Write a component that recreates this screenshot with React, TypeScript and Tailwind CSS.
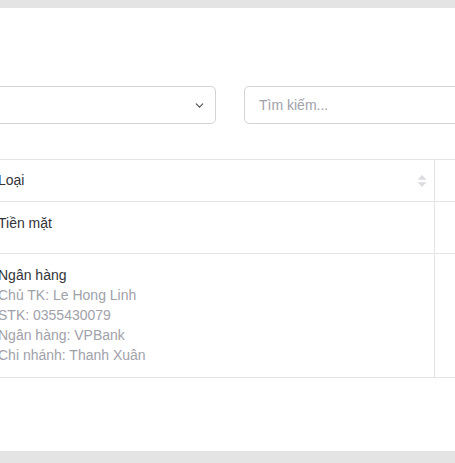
import { ChevronDown } from "lucide-react";

function SortIcon() {
  return (
    <svg width="10" height="14" viewBox="0 0 10 14" className="text-[#dcdce0]">
      <path d="M5 1 L9.5 5.8 H0.5 Z" fill="currentColor" />
      <path d="M5 13 L9.5 8.2 H0.5 Z" fill="currentColor" />
    </svg>
  );
}

export default function App() {
  return (
    <div className="w-[455px] h-[463px] overflow-hidden bg-[#e4e4e4] pt-[8px] pb-[12px] font-['Liberation_Sans',Arial,sans-serif] text-[14px]">
      <div className="h-full bg-white overflow-hidden">
        <div className="ml-[-17px] w-[520px] pt-[78px]">
          <div className="flex gap-[28px] h-[38px]">
            <div className="w-[233px] flex items-center justify-end pr-[9px] border border-[#d4d4d8] rounded-[5px]">
              <ChevronDown size={13} strokeWidth={2.2} className="text-[#52525b]" />
            </div>
            <div className="flex-1 flex items-center pl-[14px] border border-[#d4d4d8] rounded-[5px] text-[#a1a1aa]">
              Tìm kiếm...
            </div>
          </div>

          <div className="mt-[35px] border-t border-[#e4e4e7]">
            <div className="flex h-[42px] border-b border-[#e4e4e7]">
              <div className="w-[452px] flex items-center justify-between pl-[15px] pr-[7px] border-r border-[#e4e4e7] text-[#333338]">
                <span>Loại</span>
                <SortIcon />
              </div>
              <div className="flex-1" />
            </div>
            <div className="flex h-[52px] border-b border-[#e4e4e7]">
              <div className="w-[452px] pl-[15px] pt-[11px] leading-[20px] border-r border-[#e4e4e7] text-[#333338]">
                Tiền mặt
              </div>
              <div className="flex-1" />
            </div>
            <div className="flex border-b border-[#e4e4e7]">
              <div className="w-[452px] pl-[15px] pt-[11px] pb-[12px] leading-[20px] border-r border-[#e4e4e7]">
                <div className="text-[#333338]">Ngân hàng</div>
                <div className="text-[#a1a1aa]">Chủ TK: Le Hong Linh</div>
                <div className="text-[#a1a1aa]">STK: 0355430079</div>
                <div className="text-[#a1a1aa]">Ngân hàng: VPBank</div>
                <div className="text-[#a1a1aa]">Chi nhánh: Thanh Xuân</div>
              </div>
              <div className="flex-1" />
            </div>
          </div>
        </div>
      </div>
    </div>
  );
}
